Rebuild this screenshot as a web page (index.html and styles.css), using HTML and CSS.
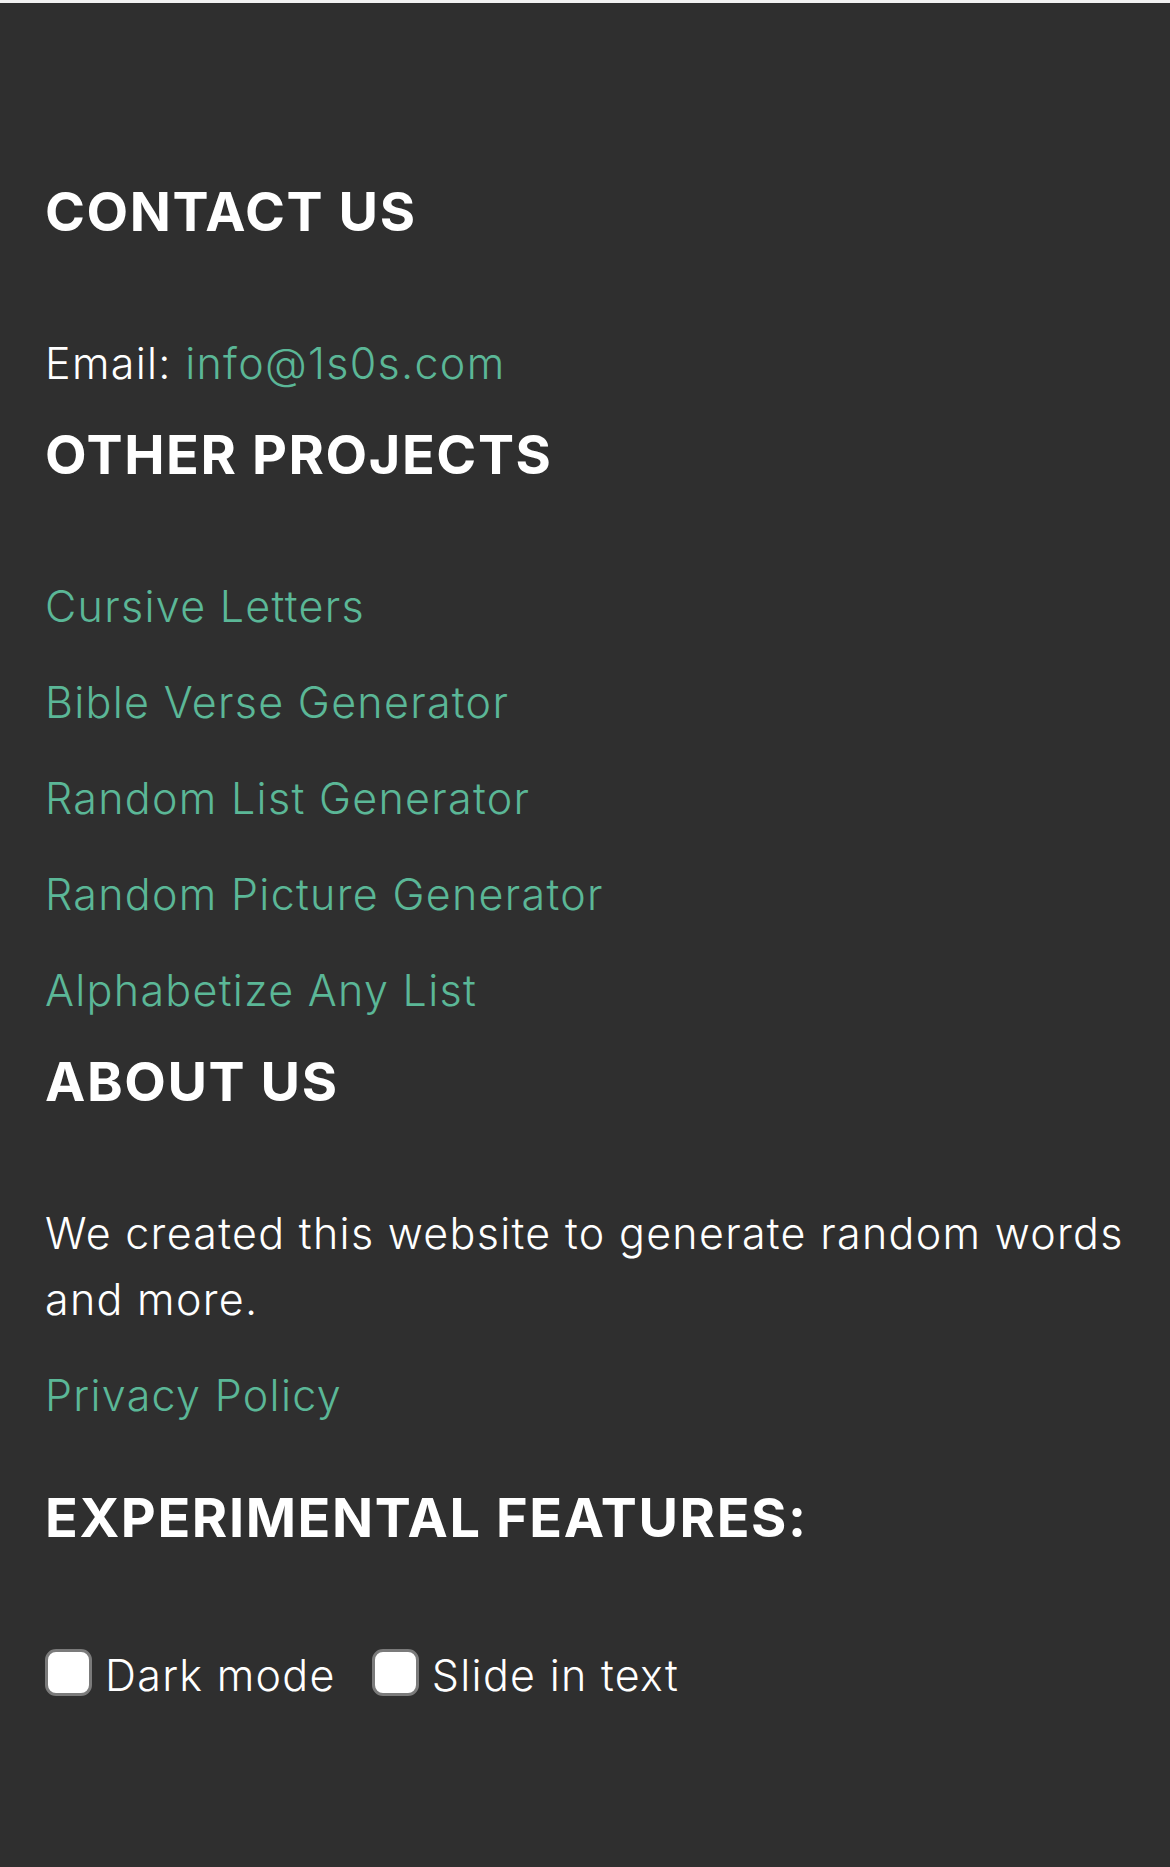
FILE: index.html
```html
<!DOCTYPE html>
<html>
  <head>
    <link rel="stylesheet" href="styles.css">
  </head>

  <body>
    <div class="footer">
      <div class="section">
        <h2>Contact Us</h2>
        <p>Email: <a href="#">info@1s0s.com</a></p>
      </div>

      <div class="section">
        <h2>Other Projects</h2>
        <ul class="projects">
          <li><a href="#">Cursive Letters</a></li>
          <li><a href="#">Bible Verse Generator</a></li>
          <li><a href="#">Random List Generator</a></li>
          <li><a href="#">Random Picture Generator</a></li>
          <li><a href="#">Alphabetize Any List</a></li>
        </ul>
      </div>

      <div class="section">
        <h2>About Us</h2>
        <p>We created this website to generate random words and more.</p>
        <p class="privacy"><a href="#">Privacy Policy</a></p>
      </div>

      <div class="section experimental">
        <h2>Experimental Features:</h2>
        <div class="toggles">
          <label class="toggle"><input type="checkbox"> Dark mode</label>
          <label class="toggle"><input type="checkbox"> Slide in text</label>
        </div>
      </div>
    </div>
  </body>
</html>
```

FILE: styles.css
```css
body {
  margin: 0;
  padding-top: 3px;
  background-color: #f2f2f2;
  font-family: Inter, "Open Sans", sans-serif;
}

.footer {
  background-color: #2f2f2f;
  color: white;
  min-height: 1864px;
  box-sizing: border-box;
  padding: 176px 45px 0 45px;
}

.section {
  margin-bottom: 26px;
}

h2 {
  margin: 0 0 85px 0;
  font-size: 54px;
  line-height: 66px;
  font-weight: 700;
  letter-spacing: 1.6px;
  text-transform: uppercase;
}

p {
  margin: 0;
  font-size: 43px;
  line-height: 66px;
  font-weight: 300;
  letter-spacing: 1.3px;
}

a {
  color: #5bb797;
  text-decoration: none;
}

.projects {
  list-style: none;
  margin: 0;
  padding: 0;
}

.projects li {
  font-size: 43px;
  line-height: 66px;
  font-weight: 300;
  letter-spacing: 1.3px;
  margin-bottom: 30px;
}

.projects li:last-child {
  margin-bottom: 0;
}

.privacy {
  margin-top: 30px;
}

.experimental {
  margin-top: 57px;
}

.experimental h2 {
  margin-bottom: 91px;
}

.toggles {
  display: flex;
  gap: 36px;
}

.toggle {
  display: flex;
  align-items: center;
  gap: 13px;
  font-size: 43px;
  line-height: 66px;
  font-weight: 300;
  letter-spacing: 1.3px;
}

.toggle input {
  appearance: none;
  width: 47px;
  height: 47px;
  margin: 0 0 6px 0;
  background-color: white;
  border: 3px solid #7b7b7b;
  border-radius: 11px;
  box-sizing: border-box;
}
```
